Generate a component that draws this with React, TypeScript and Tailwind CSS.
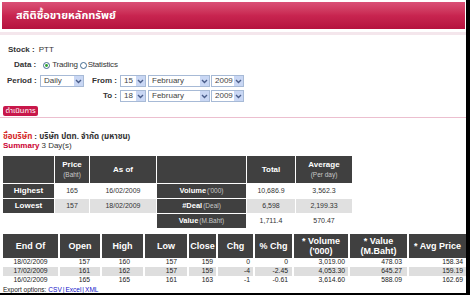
import React from "react";

function Sel({ cls, text }: { cls: string; text: string }) {
  return (
    <div className={`flex items-center h-[12px] border border-[#a7bad6] bg-white ${cls}`}>
      <span className="flex-1 pl-[3px] text-[8px] leading-none text-[#444]">{text}</span>
      <span className="w-[9px] h-full bg-[#c9d7f4] flex items-center justify-center">
        <svg width="7" height="5" viewBox="0 0 7 5">
          <path d="M1 1 L3.5 3.5 L6 1" stroke="#4a5d8a" strokeWidth="1.4" fill="none" />
        </svg>
      </span>
    </div>
  );
}

function Radio({ on }: { on: boolean }) {
  return (
    <svg width="7" height="7" viewBox="0 0 7 7" className="shrink-0">
      <circle cx="3.5" cy="3.5" r="3" fill="white" stroke="#2f5a85" strokeWidth="0.9" />
      {on && <circle cx="3.5" cy="3.5" r="1.4" fill="#2aa12a" />}
    </svg>
  );
}

const dark = "bg-[#404040] text-white";

function SumHead({ a, b }: { a: string; b?: string }) {
  return (
    <div className={`${dark} flex flex-col items-center justify-center leading-[10px]`}>
      <span className="text-[8px] font-bold">{a}</span>
      {b && <span className="text-[6.5px] text-[#c8c8c8]">{b}</span>}
    </div>
  );
}

function Cell({ t, gray }: { t: string; gray?: boolean }) {
  return (
    <div className={`${gray ? "bg-[#e0e0e0]" : "bg-white"} flex items-center justify-center text-[7px] text-[#333]`}>
      {t}
    </div>
  );
}

function Lab({ a, b }: { a: string; b: string }) {
  return (
    <div className={`${dark} flex items-center justify-center text-[7.5px]`}>
      <span className="font-bold">{a}</span>
      <span className="text-[6.5px] text-[#c8c8c8] ml-[1px]">{b}</span>
    </div>
  );
}

const rows = [
  ["18/02/2009", "157", "160", "157", "159", "0", "0", "3,019.00", "478.03", "158.34"],
  ["17/02/2009", "161", "162", "157", "159", "-4", "-2.45", "4,053.30", "645.27", "159.19"],
  ["16/02/2009", "165", "165", "161", "163", "-1", "-0.61", "3,614.60", "588.09", "162.69"],
];

const pads = [
  "justify-center",
  "justify-end pr-[10px]",
  "justify-end pr-[13px]",
  "justify-end pr-[10px]",
  "justify-end pr-[3px]",
  "justify-end pr-[3px]",
  "justify-end pr-[4px]",
  "justify-end pr-[3px]",
  "justify-end pr-[5px]",
  "justify-end pr-[3px]",
];

function BH({ a, b }: { a: string; b?: string }) {
  return (
    <div className={`${dark} flex flex-col items-center justify-center text-[9px] font-bold leading-[10px]`}>
      <span>{a}</span>
      {b && <span>{b}</span>}
    </div>
  );
}

export default function App() {
  return (
    <div className="w-[470px] h-[295px] bg-white overflow-hidden border-r-[4px] border-b-[2px] border-black font-['Liberation_Sans','Noto_Sans_Thai','Noto_Sans','DejaVu_Sans',sans-serif] text-[#333]">
      <div className="pt-[2px] pl-[2px] pr-[1px]">
        <div className="h-[27px] bg-gradient-to-b from-[#da5077] via-[#c82550] to-[#b5113e] flex items-center pl-[14px]">
          <span className="text-white font-bold text-[11px]">สถิติซื้อขายหลักทรัพย์</span>
        </div>
      </div>
      <div className="mt-[3px] h-[3px] bg-[#f4e6ec]" />

      <div className="mt-[9px] h-[12px] flex items-center pl-[8px] text-[8px]">
        <span className="font-bold">Stock :</span>
        <span className="ml-[4px]">PTT</span>
      </div>

      <div className="mt-[3px] h-[12px] flex items-center pl-[14px] text-[8px]">
        <span className="font-bold">Data :</span>
        <span className="ml-[7px]"><Radio on /></span>
        <span className="ml-[2px] tracking-[-0.2px]">Trading</span>
        <span className="ml-[2px]"><Radio on={false} /></span>
        <span className="ml-[1px] tracking-[-0.2px]">Statistics</span>
      </div>

      <div className="mt-[4px] h-[12px] flex items-center text-[8px]">
        <span className="w-[40px] pl-[7px] font-bold">Period :</span>
        <Sel cls="w-[44px]" text="Daily" />
        <span className="w-[36px] text-right pr-[3px] font-bold">From :</span>
        <Sel cls="w-[26px]" text="15" />
        <Sel cls="w-[62px] ml-[2px]" text="February" />
        <Sel cls="w-[33px] ml-[1px]" text="2009" />
      </div>

      <div className="mt-[3px] h-[12px] flex items-center text-[8px]">
        <span className="w-[84px]" />
        <span className="w-[36px] text-right pr-[3px] font-bold">To :</span>
        <Sel cls="w-[26px]" text="18" />
        <Sel cls="w-[62px] ml-[2px]" text="February" />
        <Sel cls="w-[33px] ml-[1px]" text="2009" />
      </div>

      <div className="mt-[4px] pl-[3px]">
        <div className="w-[35px] h-[10px] bg-[#c8174a] rounded-[2px] flex items-center justify-center text-white text-[7.5px] leading-none">
          ดำเนินการ
        </div>
      </div>
      <div className="mt-[1px] h-[1px] bg-[#ecbfcf]" />

      <div className="mt-[14px] h-[10px] flex items-center pl-[3px] text-[8px] font-bold">
        <span className="text-[#d62a2a]">ชื่อบริษัท</span>
        <span className="ml-[2px]">: บริษัท ปตท. จำกัด (มหาชน)</span>
      </div>
      <div className="h-[8px] flex items-center pl-[3px] text-[8px]">
        <span className="text-[#cc0033] font-bold">Summary</span>
        <span className="ml-[2px]">3 Day(s)</span>
      </div>

      <div className="mt-[6px] ml-[3px] grid grid-cols-[51px_34px_66px_89px_48px_56px] grid-rows-[27px_14px_14px_14px] gap-[1px] w-[349px]">
        <div className={dark} />
        <SumHead a="Price" b="(Baht)" />
        <SumHead a="As of" />
        <div className={dark} />
        <SumHead a="Total" />
        <SumHead a="Average" b="(Per day)" />

        <div className={`${dark} flex items-center justify-center text-[8px] font-bold`}>Highest</div>
        <Cell t="165" />
        <Cell t="16/02/2009" />
        <Lab a="Volume" b="('000)" />
        <Cell t="10,686.9" />
        <Cell t="3,562.3" />

        <div className={`${dark} flex items-center justify-center text-[8px] font-bold`}>Lowest</div>
        <Cell t="157" gray />
        <Cell t="18/02/2009" gray />
        <Lab a="#Deal" b="(Deal)" />
        <Cell t="6,598" gray />
        <Cell t="2,199.33" gray />

        <div />
        <div />
        <div />
        <Lab a="Value" b="(M.Baht)" />
        <Cell t="1,711.4" />
        <Cell t="570.47" />
      </div>

      <div className="mt-[6px] ml-[3px] grid grid-cols-[55px_40px_41px_42px_27px_35px_37px_54px_57px_57px] grid-rows-[24px_9px_9px_9px] gap-x-[2px] w-[463px]">
        <BH a="End Of" />
        <BH a="Open" />
        <BH a="High" />
        <BH a="Low" />
        <BH a="Close" />
        <BH a="Chg" />
        <BH a="% Chg" />
        <BH a="* Volume" b="('000)" />
        <BH a="* Value" b="(M.Baht)" />
        <BH a="* Avg Price" />
        {rows.map((r, i) =>
          r.map((c, j) => (
            <div
              key={`${i}-${j}`}
              className={`flex items-center ${pads[j]} text-[6.8px] leading-none text-[#222] ${i === 1 ? "bg-[#dedede]" : "bg-white"}`}
            >
              {c}
            </div>
          ))
        )}
      </div>

      <div className="h-[9px] flex items-center pl-[3px] text-[6.5px] text-[#222]">
        <span>Export options:</span>
        <span className="ml-[2px] text-[#1515c8] underline">CSV</span>
        <span className="text-[#1515c8] mx-[1px]">|</span>
        <span className="text-[#1515c8] underline">Excel</span>
        <span className="text-[#1515c8] mx-[1px]">|</span>
        <span className="text-[#1515c8] underline">XML</span>
      </div>
    </div>
  );
}
